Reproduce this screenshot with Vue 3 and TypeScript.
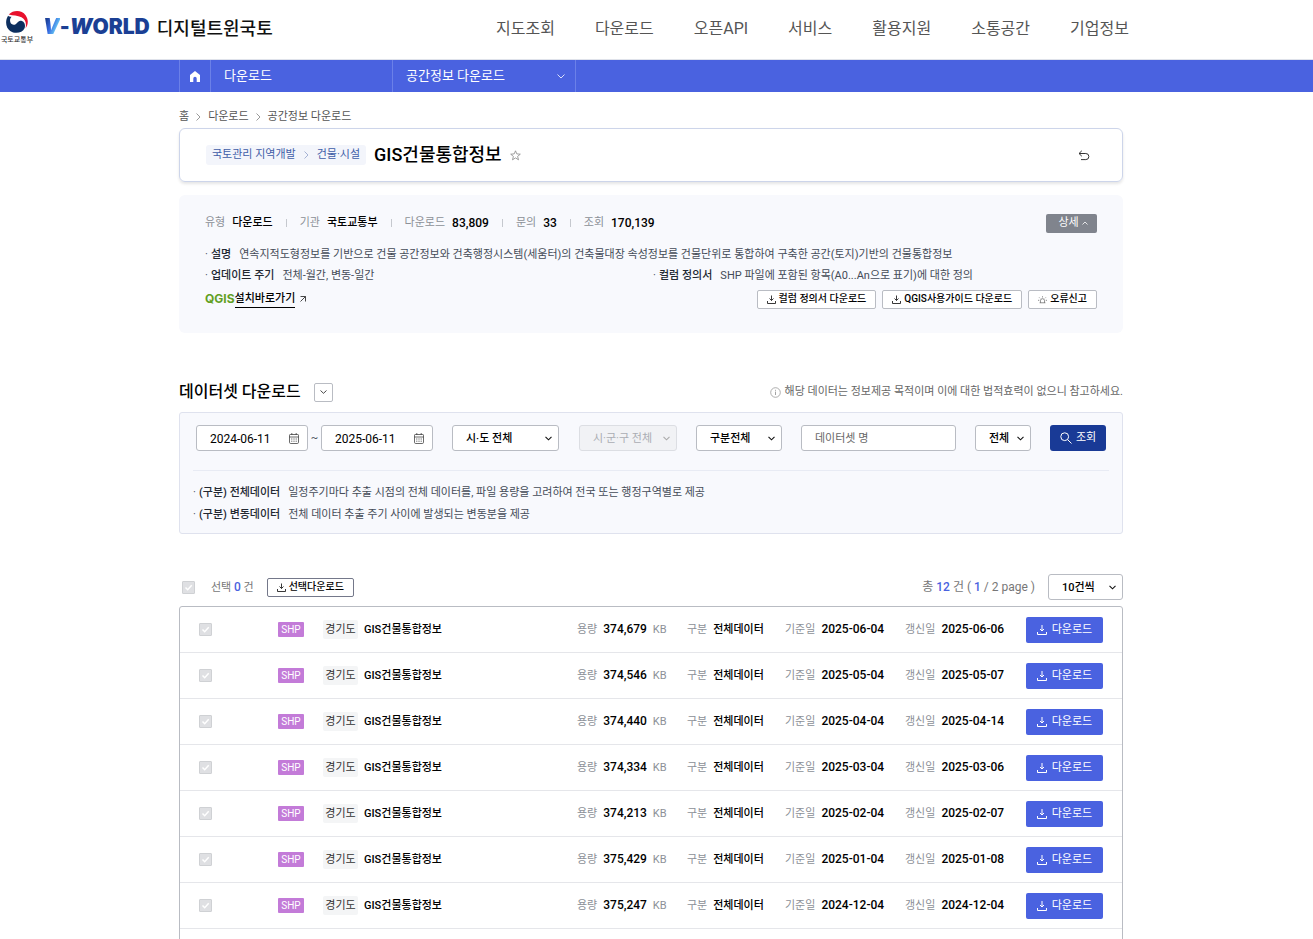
<script setup lang="ts">
import { ref } from 'vue'

interface Dataset {
  size: string
  base: string
  updated: string
}

const menus: string[] = ['지도조회', '다운로드', '오픈API', '서비스', '활용지원', '소통공간', '기업정보']

const stats = [
  { label: '유형', value: '다운로드' },
  { label: '기관', value: '국토교통부' },
  { label: '다운로드', value: '83,809', num: true },
  { label: '문의', value: '33', num: true },
  { label: '조회', value: '170,139', num: true },
]

const rows: Dataset[] = [
  { size: '374,679', base: '2025-06-04', updated: '2025-06-06' },
  { size: '374,546', base: '2025-05-04', updated: '2025-05-07' },
  { size: '374,440', base: '2025-04-04', updated: '2025-04-14' },
  { size: '374,334', base: '2025-03-04', updated: '2025-03-06' },
  { size: '374,213', base: '2025-02-04', updated: '2025-02-07' },
  { size: '375,429', base: '2025-01-04', updated: '2025-01-08' },
  { size: '375,247', base: '2024-12-04', updated: '2024-12-04' },
]

const from = ref('2024-06-11')
const to = ref('2025-06-11')
const keyword = ref('')
</script>

<template>
  <div class="page">
    <header class="header">
      <a href="#" class="ministry" aria-label="국토교통부">
        <svg width="22" height="22" viewBox="0 0 64 64" aria-hidden="true">
          <path d="M8 10C22-4 46-3 57 12c9 13 8 28 0 38 3-14 0-26-12-32C34 12 20 14 8 10z" fill="#e8112d" />
          <path d="M6 14C-4 30 0 50 12 58c14 10 36 6 42-8 4-12-2-22-12-22-8 0-10 12-20 12C12 40 8 26 16 17c-4 0-8-1-10-3z" fill="#0d2f5f" />
        </svg>
        <span>국토교통부</span>
      </a>
      <a href="#" class="brand">
        <span class="brand-v">V</span><span>-</span><span class="brand-w">W</span><span>ORLD</span>
        <span class="brand-ko">디지털트윈국토</span>
      </a>
      <nav class="menu" aria-label="주 메뉴">
        <a v-for="m in menus" :key="m" href="#">{{ m }}</a>
      </nav>
    </header>

    <nav class="subnav" aria-label="현재 메뉴">
      <a href="#" class="home" aria-label="홈">
        <svg width="10" height="11" viewBox="0 0 10 11"><path d="M5 0L0 4v7h3.300V7.500a1.700 1.700 0 013.400 0V11H10V4z" fill="#fff" /></svg>
      </a>
      <a href="#" class="depth depth1">다운로드</a>
      <a href="#" class="depth depth2">공간정보 다운로드
        <svg width="8" height="5" viewBox="0 0 8 5"><path d="M.5.5L4 4 7.500.5" fill="none" stroke="#fff" stroke-width=".8" /></svg>
      </a>
    </nav>

    <main class="main">
      <div class="crumbs">
        <a href="#">홈</a>
        <svg width="5" height="8" viewBox="0 0 5 8"><path d="M.5.5L4 4 .5 7.500" fill="none" stroke="#999" /></svg>
        <a href="#">다운로드</a>
        <svg width="5" height="8" viewBox="0 0 5 8"><path d="M.5.5L4 4 .5 7.500" fill="none" stroke="#999" /></svg>
        <a href="#">공간정보 다운로드</a>
      </div>

      <section class="title-card">
        <span class="category">국토관리 지역개발
          <svg width="5" height="8" viewBox="0 0 5 8"><path d="M.5.5L4 4 .5 7.500" fill="none" stroke="#a5b2d4" /></svg>
          건물·시설</span>
        <h1>GIS건물통합정보</h1>
        <button class="plain" type="button" aria-label="즐겨찾기">
          <svg width="11" height="11" viewBox="0 0 11 11"><path d="M5.500.8l1.300 3.100 3.500.3-2.700 2.200.9 3.400-3-1.900-3 1.900.9-3.400L.7 4.200l3.500-.3z" fill="none" stroke="#888" stroke-width=".8" /></svg>
        </button>
        <button class="plain back" type="button" aria-label="뒤로">
          <svg width="12" height="11" viewBox="0 0 12 11"><path d="M3.800.8L1 3.500l2.800 2.700M1 3.500h6.800a3 3 0 010 6.100H3" fill="none" stroke="#333" /></svg>
        </button>
      </section>

      <section class="info">
        <div class="stats">
          <dl>
            <div v-for="s in stats" :key="s.label">
              <dt>{{ s.label }}</dt>
              <dd :class="{ num: s.num }">{{ s.value }}</dd>
            </div>
          </dl>
          <button class="detail" type="button">상세
            <svg width="6" height="4" viewBox="0 0 6 4"><path d="M.5 3.500L3 1l2.500 2.500" fill="none" stroke="#fff" stroke-width=".8" /></svg>
          </button>
        </div>
        <p class="bullet"><b>설명</b>연속지적도형정보를 기반으로 건물 공간정보와 건축행정시스템(세움터)의 건축물대장 속성정보를 건물단위로 통합하여 구축한 공간(토지)기반의 건물통합정보</p>
        <div class="pair">
          <p class="bullet"><b>업데이트 주기</b>전체-월간, 변동-일간</p>
          <p class="bullet"><b>컬럼 정의서</b>SHP 파일에 포함된 항목(A0...An으로 표기)에 대한 정의</p>
        </div>
        <div class="actions">
          <a href="#" class="qgis"><em>QGIS</em><span>설치바로가기</span>
            <svg width="6" height="6" viewBox="0 0 6 6"><path d="M.5.5h5v5M5.500.5l-5 5" fill="none" stroke="#333" stroke-width=".9" /></svg>
          </a>
          <button class="small" type="button">
            <svg width="9" height="9" viewBox="0 0 9 9"><path d="M4.500.5v5M2.500 3.500l2 2 2-2M.5 6v2.500h8V6" fill="none" stroke="#222" stroke-width=".9" /></svg>컬럼 정의서 다운로드
          </button>
          <button class="small" type="button">
            <svg width="9" height="9" viewBox="0 0 9 9"><path d="M4.500.5v5M2.500 3.500l2 2 2-2M.5 6v2.500h8V6" fill="none" stroke="#222" stroke-width=".9" /></svg>QGIS사용가이드 다운로드
          </button>
          <button class="small" type="button">
            <svg width="9" height="9" viewBox="0 0 11 9"><path d="M2 8.500h7M3 8.500V6a2.500 2.500 0 015 0v2.500M5.500 2V.5M2.500 3L1.500 2M8.500 3l1-1M1.500 5.500H0M9.500 5.500H11" fill="none" stroke="#555" stroke-width=".8" /></svg>오류신고
          </button>
        </div>
      </section>

      <div class="heading">
        <h2>데이터셋 다운로드</h2>
        <button class="toggle" type="button" aria-label="데이터셋 펼치기">
          <svg width="7" height="4" viewBox="0 0 7 4"><path d="M.5.5l3 2.800 3-2.800" fill="none" stroke="#333" stroke-width=".9" /></svg>
        </button>
        <p>
          <svg width="11" height="11" viewBox="0 0 11 11"><circle cx="5.500" cy="5.500" r="4.800" fill="none" stroke="#999" stroke-width=".8" /><path d="M5.500 4.600V8M5.500 2.800v1" stroke="#999" stroke-width=".9" /></svg>
          해당 데이터는 정보제공 목적이며 이에 대한 법적효력이 없으니 참고하세요.
        </p>
      </div>

      <form class="filter" @submit.prevent>
        <div class="controls">
          <span class="field date">
            <input v-model="from" type="text" aria-label="시작일" />
            <svg width="10" height="11" viewBox="0 0 10 11"><path d="M.5 2.200q0-.7.7-.7h7.600q.7 0 .7.700v7.100q0 1.200-1.200 1.200H1.700Q.5 10.500.5 9.300zM.5 4h9M2.800 0v2M7.200 0v2" fill="none" stroke="#444" stroke-width=".8" /><path d="M2.300 6h5.800M2.300 8.200h5.800" stroke="#444" stroke-dasharray="1 1.200" /></svg>
          </span>
          <span class="tilde">~</span>
          <span class="field date">
            <input v-model="to" type="text" aria-label="종료일" />
            <svg width="10" height="11" viewBox="0 0 10 11"><path d="M.5 2.200q0-.7.7-.7h7.600q.7 0 .7.700v7.100q0 1.200-1.200 1.200H1.700Q.5 10.500.5 9.300zM.5 4h9M2.800 0v2M7.200 0v2" fill="none" stroke="#444" stroke-width=".8" /><path d="M2.300 6h5.800M2.300 8.200h5.800" stroke="#444" stroke-dasharray="1 1.200" /></svg>
          </span>
          <span class="field pick sido">
            <select aria-label="시·도"><option>시·도 전체</option></select>
            <svg width="7" height="5" viewBox="0 0 7 5"><path d="M.5.8l3 3 3-3" fill="none" stroke="#111" stroke-width="1.100" /></svg>
          </span>
          <span class="field pick sigungu off">
            <select aria-label="시·군·구" disabled><option>시·군·구 전체</option></select>
            <svg width="7" height="5" viewBox="0 0 7 5"><path d="M.5.8l3 3 3-3" fill="none" stroke="#aaa" stroke-width="1.100" /></svg>
          </span>
          <span class="field pick kind">
            <select aria-label="구분"><option>구분전체</option></select>
            <svg width="7" height="5" viewBox="0 0 7 5"><path d="M.5.8l3 3 3-3" fill="none" stroke="#111" stroke-width="1.100" /></svg>
          </span>
          <span class="field word">
            <input v-model="keyword" type="text" placeholder="데이터셋 명" aria-label="데이터셋 명" />
          </span>
          <span class="field pick scope">
            <select aria-label="검색 범위"><option>전체</option></select>
            <svg width="7" height="5" viewBox="0 0 7 5"><path d="M.5.8l3 3 3-3" fill="none" stroke="#111" stroke-width="1.100" /></svg>
          </span>
          <button class="search" type="submit">
            <svg width="12" height="12" viewBox="0 0 12 12"><circle cx="4.700" cy="4.700" r="3.900" fill="none" stroke="#fff" /><path d="M7.600 7.600l3.900 3.900" stroke="#fff" /></svg>조회
          </button>
        </div>
        <div class="notes">
          <p class="bullet"><b>(구분) 전체데이터</b>일정주기마다 추출 시점의 전체 데이터를, 파일 용량을 고려하여 전국 또는 행정구역별로 제공</p>
          <p class="bullet"><b>(구분) 변동데이터</b>전체 데이터 추출 주기 사이에 발생되는 변동분을 제공</p>
        </div>
      </form>

      <div class="toolbar">
        <input type="checkbox" class="check" disabled aria-label="전체 선택" />
        <span class="picked">선택 <b>0</b> 건</span>
        <button class="small dark" type="button">
          <svg width="9" height="9" viewBox="0 0 9 9"><path d="M4.500.5v5M2.500 3.500l2 2 2-2M.5 6v2.500h8V6" fill="none" stroke="#222" stroke-width=".9" /></svg>선택다운로드
        </button>
        <span class="total">총 <b>12</b> 건 ( <b>1</b> / 2 page )</span>
        <span class="field pick per">
          <select aria-label="페이지당 건수"><option>10건씩</option></select>
          <svg width="7" height="5" viewBox="0 0 7 5"><path d="M.5.8l3 3 3-3" fill="none" stroke="#111" stroke-width="1.100" /></svg>
        </span>
      </div>

      <ul class="list">
        <li v-for="r in rows" :key="r.base">
          <input type="checkbox" class="check" disabled :aria-label="'GIS건물통합정보 ' + r.base" />
          <span class="shp">SHP</span>
          <span class="region">경기도</span>
          <a href="#" class="name">GIS건물통합정보</a>
          <span class="meta size">용량<b>{{ r.size }}</b>KB</span>
          <span class="meta type">구분<b class="ko">전체데이터</b></span>
          <span class="meta day">기준일<b>{{ r.base }}</b></span>
          <span class="meta day">갱신일<b>{{ r.updated }}</b></span>
          <button class="download" type="button">
            <svg width="10" height="10" viewBox="0 0 10 10"><path d="M5 0v6M3 4l2 2 2-2M.5 7v2.500h9V7" fill="none" stroke="#fff" /></svg>다운로드
          </button>
        </li>
        <li class="next">
          <button class="download" type="button" aria-label="다운로드"></button>
        </li>
      </ul>
    </main>
  </div>
</template>

<style>
body {
  margin: 0;
  background: #fff;
}
</style>

<style scoped>
* {
  box-sizing: border-box;
}
.page {
  height: 100vh;
  overflow: hidden;
  font-family: Roboto, "Noto Sans CJK KR", sans-serif;
  font-size: 11px;
  line-height: 20px;
  color: #444b57;
}
a {
  color: inherit;
  text-decoration: none;
}
button,
input,
select {
  font: inherit;
  color: inherit;
  margin: 0;
}
button {
  display: inline-flex;
  align-items: center;
  justify-content: center;
  padding: 0;
  border: 0;
  white-space: nowrap;
}
svg {
  flex: none;
}
p,
h1,
h2,
dl,
dd,
ul {
  margin: 0;
  padding: 0;
}
b {
  font-weight: 500;
}

.header {
  display: flex;
  align-items: center;
  height: 60px;
  padding-bottom: 2px;
  border-bottom: 1px solid #dfe2ea;
}
.ministry {
  display: flex;
  flex-direction: column;
  align-items: center;
  width: 34px;
  font-size: 7px;
  font-weight: 500;
  line-height: 14px;
  color: #333;
}
.ministry span {
  white-space: nowrap;
}
.brand {
  display: flex;
  align-items: center;
  width: 229px;
  margin: 0 0 4px 9px;
  font-family: Inter, sans-serif;
  font-size: 21px;
  font-weight: 900;
  line-height: 24px;
  color: #1b3f94;
  white-space: nowrap;
}
.brand-v {
  font-style: italic;
  background: linear-gradient(115deg, #1b3f94 20%, #3568e0 45%, #6fd6f7 75%);
  background-clip: text;
  -webkit-background-clip: text;
  color: transparent;
}
.brand-w {
  font-style: italic;
}
.brand-ko {
  margin-left: 7px;
  font-family: "Noto Sans CJK KR", sans-serif;
  font-size: 18px;
  font-weight: 500;
  color: #111;
}
.menu {
  display: flex;
  gap: 40px;
  margin-left: 224px;
  font-size: 16px;
  line-height: 24px;
  color: #555;
  white-space: nowrap;
}

.subnav {
  display: flex;
  height: 32px;
  padding-left: 179px;
  background: #4a62e0;
  color: #fff;
  font-size: 13px;
  line-height: 32px;
}
.home {
  display: flex;
  align-items: center;
  justify-content: center;
  width: 32px;
  border: solid #6b80e8;
  border-width: 0 1px;
}
.depth {
  display: flex;
  align-items: center;
  justify-content: space-between;
  padding: 0 10px 0 13px;
  border-right: 1px solid #6b80e8;
}
.depth1 {
  width: 182px;
}
.depth2 {
  width: 183px;
}

.main {
  margin: 0 190px 0 179px;
}
.crumbs {
  display: flex;
  align-items: center;
  gap: 7px;
  height: 36px;
  padding-top: 14px;
  color: #555;
}
.title-card {
  display: flex;
  align-items: center;
  height: 54px;
  padding: 0 32px 0 26px;
  border: 1px solid #cdd5ea;
  border-radius: 6px;
  box-shadow: 0 2px 3px #0000001a;
}
.category {
  display: flex;
  align-items: center;
  gap: 8px;
  padding: 0 6px;
  border-radius: 3px;
  background: #f3f5fb;
  color: #3f5da8;
}
h1 {
  margin: 0 8px;
  font-size: 18px;
  font-weight: 500;
  line-height: 24px;
  color: #000;
}
.plain {
  background: none;
}
.back {
  margin-left: auto;
}

.info {
  height: 138px;
  margin-top: 13px;
  padding: 18px 26px 0;
  border-radius: 6px;
  background: #f8f9fd;
}
.stats {
  display: flex;
  align-items: center;
  justify-content: space-between;
  height: 20px;
  margin-bottom: 11px;
}
dl,
dl div {
  display: flex;
  align-items: center;
}
dl div + div::before {
  content: "";
  width: 1px;
  height: 8px;
  margin: 0 13px;
  background: #c5c8ce;
}
dt {
  margin-right: 7px;
  color: #8c9097;
}
dd {
  font-weight: 500;
  color: #000;
}
.num {
  font-size: 12px;
}
.detail {
  gap: 3px;
  width: 51px;
  height: 19px;
  padding-left: 3px;
  border-radius: 2px;
  background: #80848d;
  color: #fff;
}
.bullet {
  line-height: 21px;
  white-space: nowrap;
}
.bullet::before {
  content: "·";
  display: inline-block;
  width: 6px;
}
.bullet b {
  margin-right: 8px;
  color: #222832;
}
.pair {
  display: grid;
  grid-template-columns: 448px 1fr;
}
.actions {
  display: flex;
  align-items: center;
  gap: 6px;
  height: 26px;
}
.qgis {
  display: flex;
  align-items: center;
  margin-right: auto;
  color: #000;
  font-weight: 500;
}
.qgis em {
  font-family: Inter, sans-serif;
  font-size: 12px;
  font-style: normal;
  font-weight: 700;
  color: #62a022;
}
.qgis span {
  line-height: 16px;
  border-bottom: 1px solid #000;
}
.qgis svg {
  margin-left: 5px;
}
.small {
  gap: 3px;
  height: 19px;
  padding: 0 9px;
  border: 1px solid #b9bcc3;
  border-radius: 2px;
  background: #fff;
  font-size: 10px;
  font-weight: 500;
  color: #000;
}
.dark {
  border-color: #74788a;
}

.heading {
  display: flex;
  align-items: center;
  height: 20px;
  margin: 49px 0 10px;
}
h2 {
  font-size: 16px;
  font-weight: 500;
  color: #000;
}
.toggle {
  width: 19px;
  height: 19px;
  margin-left: 13px;
  border: 1px solid #b9bcc3;
  border-radius: 2px;
  background: #fff;
}
.heading p {
  display: flex;
  align-items: center;
  gap: 4px;
  margin-left: auto;
  color: #666;
}

.filter {
  height: 122px;
  padding: 12px 13px 0;
  border: 1px solid #dfe2ee;
  border-radius: 3px;
  background: #f8f9fd;
}
.controls {
  display: flex;
  align-items: flex-start;
  height: 46px;
  padding: 0 3px;
  border-bottom: 1px solid #e8ebf4;
}
.field {
  display: flex;
  align-items: center;
  flex: none;
  height: 26px;
  padding-right: 8px;
  border: 1px solid #b9bcc3;
  border-radius: 3px;
  background: #fff;
  color: #000;
}
.field input,
.field select {
  flex: 1;
  min-width: 0;
  height: 24px;
  padding: 1px 0 0 13px;
  border: 0;
  outline: 0;
  background: none;
  appearance: none;
}
.field input::placeholder {
  color: #666;
  opacity: 1;
}
.pick {
  padding-right: 6px;
  font-weight: 500;
}
.date {
  width: 112px;
  font-size: 12px;
}
.tilde {
  width: 13px;
  line-height: 26px;
  text-align: center;
}
.sido {
  width: 107px;
  margin-left: 19px;
}
.sigungu {
  width: 98px;
  margin-left: 20px;
}
.off {
  border-color: #dcdee3;
  background: #f1f2f5;
  color: #aaadb3;
  font-weight: 400;
}
.off select {
  opacity: 1;
}
.kind {
  width: 86px;
  margin-left: 19px;
}
.word {
  width: 155px;
  margin-left: 19px;
}
.scope {
  width: 56px;
  margin-left: 19px;
}
.search {
  gap: 4px;
  width: 56px;
  height: 26px;
  margin-left: 19px;
  border-radius: 3px;
  background: #193a96;
  color: #fff;
}
.notes {
  padding-top: 11px;
}
.notes .bullet {
  line-height: 22px;
}

.toolbar {
  display: flex;
  align-items: center;
  height: 26px;
  margin: 40px 0 6px;
  color: #777;
}
.toolbar b {
  font-size: 12px;
  color: #4a62e0;
}
.check {
  flex: none;
  width: 13px;
  height: 13px;
  border: 1px solid #cfd1d4;
  border-radius: 1px;
  appearance: none;
  background: #dfe0e3 url("data:image/svg+xml,%3Csvg xmlns='http://www.w3.org/2000/svg' viewBox='0 0 11 11'%3E%3Cpath d='M2.500 5.500l2.200 2.200 4-4.400' fill='none' stroke='%23fff' stroke-width='1.500'/%3E%3C/svg%3E");
}
.toolbar .check {
  margin-left: 3px;
}
.picked {
  margin: 0 13px 0 16px;
}
.total {
  margin: 0 13px 0 auto;
  font-size: 12px;
}
.per {
  width: 75px;
}

.list {
  border: 1px solid #b9bcc3;
  border-radius: 3px;
  list-style: none;
}
.list li {
  display: flex;
  align-items: center;
  height: 46px;
  padding: 0 19px;
  border-bottom: 1px solid #e5e6ea;
  white-space: nowrap;
}
.list .next {
  justify-content: flex-end;
}
.shp {
  width: 26px;
  height: 15px;
  margin: 0 19px 0 66px;
  border-radius: 1px;
  background: #c37bd8;
  color: #fff;
  font-size: 10px;
  line-height: 16px;
  text-align: center;
}
.region {
  width: 35px;
  height: 19px;
  border-radius: 2px;
  background: #f4f5f6;
  color: #333;
  line-height: 19px;
  text-align: center;
}
.name {
  margin: 0 auto 0 6px;
  font-weight: 500;
  color: #000;
}
.meta {
  color: #8c9097;
}
.meta b {
  margin: 0 6px;
  font-size: 12px;
  color: #000;
}
.meta .ko {
  font-size: 11px;
}
.size {
  width: 110px;
}
.type {
  width: 98px;
}
.day {
  width: 120px;
}
.download {
  gap: 5px;
  width: 77px;
  height: 26px;
  margin-left: 1px;
  border-radius: 2px;
  background: #4a62e0;
  color: #fff;
}
</style>
